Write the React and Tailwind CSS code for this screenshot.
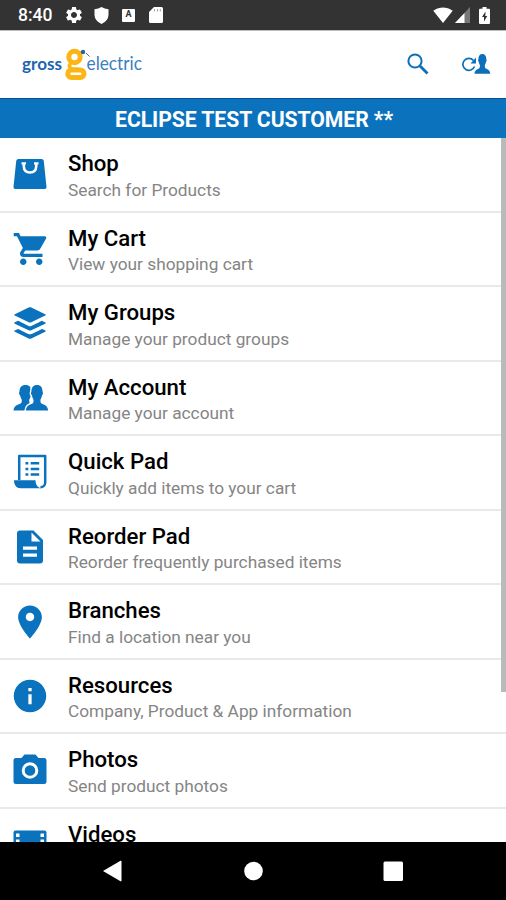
import React from 'react';
import { IoMdCart, IoLogoBuffer, IoMdPin, IoMdInformationCircle } from 'react-icons/io';
import { MdSettings, MdSignalWifi4Bar } from 'react-icons/md';

const BagIcon = ({ className }) => (
    <svg className={className} viewBox="0 0 40 40">
        <path d="M8.500 5h23q2 0 2.300 2l2.700 26q.2 2-1.800 2H5.300q-2 0-1.800-2L6.200 7q.3-2 2.300-2z" fill="currentColor" />
        <path d="M13.800 9v3.500q.3 6 6.200 6t6.200-6V9" fill="none" stroke="#fff" strokeWidth="2.600" />
        <path d="M11.500 9.300h4.500M24 9.300h4.500" stroke="#fff" strokeWidth="2.200" />
    </svg>
);

const PersonShape = () => (
    <path d="M26 7c4 0 6 2.700 6 6.500 0 1 .8 1 .3 2.600-.3 1-.8 1-1 1.900-.4 2-1.600 3-1.600 4.200 0 2.200.3 3 2.300 3.800 3.500 1.300 5.500 2.300 6 6.500H14c.5-4.200 2.500-5.200 6-6.500 2-.8 2.300-1.600 2.300-3.800 0-1.200-1.200-2.200-1.600-4.200-.2-.9-.7-.9-1-1.900-.5-1.600.3-1.600.3-2.600C20 9.700 22 7 26 7z" />
);

const PeopleIcon = ({ className }) => (
    <svg className={className} viewBox="0 0 40 40" fill="currentColor">
        <g transform="translate(-10.500 0)">
            <PersonShape />
        </g>
        <g transform="translate(2.800 0) scale(.93 1)" stroke="#fff" strokeWidth="3">
            <PersonShape />
        </g>
        <g transform="translate(2.800 0) scale(.93 1)">
            <PersonShape />
        </g>
    </svg>
);

const ScrollIcon = ({ className }) => (
    <svg className={className} viewBox="0 0 40 40">
        <path d="M9.200 28V4h26v26.500a4.800 4.800 0 0 1-4.800 4.800" fill="none" stroke="currentColor" strokeWidth="2.500" strokeLinejoin="round" />
        <path d="M4 28.300h21.500c0 4 1.500 6.800 5 8H10.500C6.500 36.300 4 33 4 28.300z" fill="currentColor" />
        <path d="M15.500 11.200h2.800M15.500 17h2.800M15.500 22.600h2.800M20.700 11.200h8.500M20.700 17h8.500M20.700 22.600h8.500" stroke="currentColor" strokeWidth="2.500" />
    </svg>
);

const DocumentIcon = ({ className }) => (
    <svg className={className} viewBox="0 0 40 40">
        <path d="M10 3.500h13.500l9.500 9.500v20.500q0 3-3 3H10q-3 0-3-3v-27q0-3 3-3z" fill="currentColor" />
        <path d="M21.500 5.500v9h9zM13 19.500h14v3.200H13zM13 26.500h14v3.200H13z" fill="#fff" />
    </svg>
);

const CameraIcon = ({ className }) => (
    <svg className={className} viewBox="0 0 40 40">
        <path d="M14.500 3.500h11l3 3.500H34q2.500 0 2.500 2.500v21q0 2.500-2.500 2.500H6q-2.500 0-2.500-2.500v-21Q3.500 7 6 7h5.500z" fill="currentColor" />
        <circle cx="20" cy="19.500" r="6.800" fill="none" stroke="#fff" strokeWidth="3" />
    </svg>
);

const FilmIcon = ({ className }) => (
    <svg className={className} viewBox="0 0 40 40">
        <rect x="3.500" y="5.500" width="33" height="28" rx="2" fill="currentColor" />
        <path d="M6 8.500h3.500v3.500H6zM6 14.500h3.500V18H6zM6 21h3.500v3.500H6zM30.500 8.500H34v3.500h-3.500zM30.500 14.500H34V18h-3.500zM30.500 21H34v3.500h-3.500z" fill="#fff" />
    </svg>
);

const menu = [
    { title: 'Shop', text: 'Search for Products', Icon: BagIcon },
    { title: 'My Cart', text: 'View your shopping cart', Icon: IoMdCart },
    { title: 'My Groups', text: 'Manage your product groups', Icon: IoLogoBuffer, size: 'h-[42px] w-[42px]' },
    { title: 'My Account', text: 'Manage your account', Icon: PeopleIcon },
    { title: 'Quick Pad', text: 'Quickly add items to your cart', Icon: ScrollIcon },
    { title: 'Reorder Pad', text: 'Reorder frequently purchased items', Icon: DocumentIcon },
    { title: 'Branches', text: 'Find a location near you', Icon: IoMdPin, size: 'h-[38px] w-[38px]' },
    { title: 'Resources', text: 'Company, Product & App information', Icon: IoMdInformationCircle },
    { title: 'Photos', text: 'Send product photos', Icon: CameraIcon },
    { title: 'Videos', Icon: FilmIcon },
];

const StatusBar = () => (
    <div className="flex h-[30px] shrink-0 items-center bg-[#333333] pl-[18px] pr-[16px] text-white">
        <span className="w-[46px] pt-[2px] text-[17.5px] font-medium leading-none">8:40</span>
        <MdSettings className="h-[20px] w-[20px]" />
        <svg className="ml-[10px] h-[17px] w-[15px]" viewBox="0 0 15 17">
            <path d="M7.500 0Q10.500 2 14.500 2.300V8q-.3 6-7 9Q.8 14 .5 8V2.300Q4.500 2 7.500 0z" fill="#fff" />
        </svg>
        <span className="ml-[13px] flex h-[13px] w-[13px] items-center justify-center rounded-[1px] bg-white text-[9px] font-bold text-[#333333]">A</span>
        <svg className="ml-[14px] h-[16px] w-[14px]" viewBox="0 0 14 16">
            <path d="M5 0h7.500A1.500 1.500 0 0 1 14 1.500V14.500A1.500 1.500 0 0 1 12.500 16h-11A1.500 1.500 0 0 1 0 14.500V5z" fill="#fff" />
            <path d="M5.500 2v2.500M8.500 2v2.500M11.300 2v2.500" stroke="#333" strokeWidth="1" opacity=".45" />
        </svg>
        <MdSignalWifi4Bar className="ml-auto h-[20px] w-[20px]" />
        <svg className="ml-[2px] h-[16px] w-[15px]" viewBox="0 0 15 16">
            <path d="M15 0v16H0z" fill="#777" />
            <path d="M9.500 6v10H0z" fill="#fff" />
        </svg>
        <svg className="ml-[9px] h-[17px] w-[11px]" viewBox="0 0 11 17">
            <path d="M3.500 0h4v1.800H10q1 0 1 1V16q0 1-1 1H1q-1 0-1-1V2.800q0-1 1-1h2.500z" fill="#fff" />
            <path d="M6.500 4.500L3 10h2v4.500L8.300 9h-2z" fill="#333" />
        </svg>
    </div>
);

const Logo = () => (
    <svg className="h-[40px] w-[126px]" viewBox="0 0 126 40">
        <text x="1" y="26" fontFamily="Lato" fontSize="17.500" fontWeight="700" fill="#2065ae" textLength="40" lengthAdjust="spacingAndGlyphs">gross</text>
        <g fill="none" stroke="#fbb615" strokeWidth="5">
            <circle cx="53.500" cy="13" r="5.700" />
            <rect x="46.800" y="26" width="16.200" height="7.500" rx="3.700" />
            <path d="M50 19.500c-3 2-2 4.500 2 5.700h6" strokeWidth="3.500" />
            <path d="M57 8.500h4" strokeWidth="3" />
        </g>
        <circle cx="62" cy="8" r="2.200" fill="#1f62a8" />
        <path d="M65 9l3.500 3.500" stroke="#4a6a88" strokeWidth="1" />
        <text x="65.500" y="26" fontFamily="Lato" fontSize="18.500" fontWeight="400" fill="#3a80c0" textLength="55.500" lengthAdjust="spacingAndGlyphs">electric</text>
    </svg>
);

const Header = () => (
    <header className="flex h-[68px] shrink-0 items-center border-t border-[#bdbdbd] bg-white pb-[2px] pl-[21px] pr-[15px] text-[#0b6fba]">
        <Logo />
        <svg className="ml-auto h-[22px] w-[22px]" viewBox="0 0 22 22" fill="none" stroke="currentColor">
            <circle cx="8" cy="8" r="6.600" strokeWidth="2" />
            <path d="M13 13l7.500 7.500" strokeWidth="2.800" />
        </svg>
        <svg className="ml-[33px] h-[22px] w-[29px]" viewBox="0 0 29 22">
            <path d="M12.500 13.500A6 6 0 1 1 11.500 7.500" fill="none" stroke="currentColor" strokeWidth="1.700" />
            <path d="M14 4.500v6H8.500z" fill="currentColor" />
            <g transform="translate(3.200 -4.300) scale(.66 .77)" fill="currentColor">
                <PersonShape />
            </g>
        </svg>
    </header>
);

const MenuRow = ({ title, text, Icon, size = 'h-[40px] w-[40px]' }) => (
    <li className="flex h-[74.55px] shrink-0 border-b-2 border-[#e9e9e9]">
        <div className="flex w-[60px] items-center justify-center">
            <Icon className={`shrink-0 text-[#0b72bd] ${size}`} />
        </div>
        <div className="pl-[8px] pt-[11px]">
            <h2 className="text-[22.2px] font-medium leading-[28px] text-black">{title}</h2>
            {text && <p className="pt-[0.5px] text-[17.3px] leading-[24px] text-[#858585]">{text}</p>}
        </div>
    </li>
);

const NavBar = () => (
    <nav className="flex h-[58px] shrink-0 items-center bg-black pl-[102px]">
        <svg className="h-[22px] w-[302px]" viewBox="0 0 302 22" fill="#fff">
            <path d="M1 11L18.500 .8q1-.5 1 .7v19q0 1.200-1 .7z" />
            <circle cx="151.500" cy="11" r="9.300" />
            <rect x="281.500" y="1.500" width="19.500" height="19.500" rx="1.500" />
        </svg>
    </nav>
);

const App = () => (
    <div className="flex h-[900px] w-[506px] flex-col overflow-hidden bg-white font-[Roboto,sans-serif]">
        <StatusBar />
        <Header />
        <div className="h-[39.5px] shrink-0 border-t border-[#0a4f94] bg-[#0b72bd] pl-[2px] pt-[6px] text-center text-[21.2px] font-bold leading-[30px] tracking-[-0.07px] text-white">
            ECLIPSE TEST CUSTOMER **
        </div>
        <main className="relative h-[704.5px] shrink-0 overflow-hidden">
            <ul className="flex flex-col pt-[0.5px]">
                {menu.map((item) => (
                    <MenuRow key={item.title} {...item} />
                ))}
            </ul>
            <div className="absolute right-0 top-0 h-[554px] w-[5px] bg-[#bababa]" />
        </main>
        <NavBar />
    </div>
);

export default App;
